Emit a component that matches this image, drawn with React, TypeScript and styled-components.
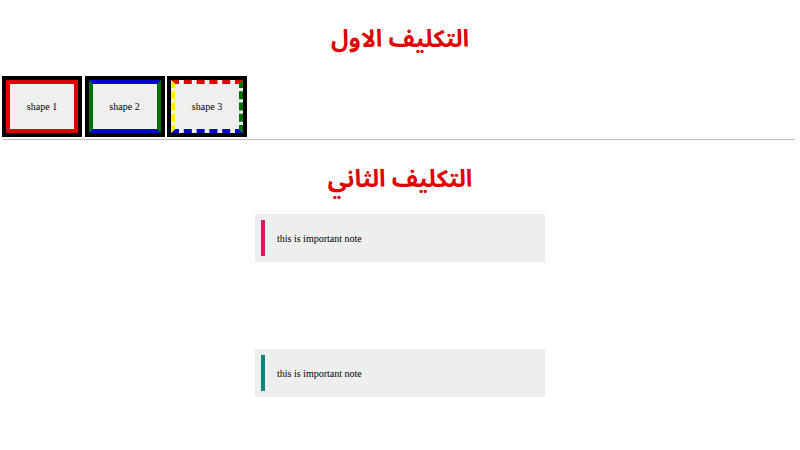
import React from 'react'
import styled, { createGlobalStyle } from 'styled-components'

const Global = createGlobalStyle`
  html, body {
    margin: 0;
    padding: 0;
    background: #fff;
  }
`

const Page = styled.div`
  width: 800px;
  height: 450px;
  overflow: hidden;
  font-family: "Liberation Serif", "Times New Roman", serif;
`

const Title = styled.h1`
  margin: 0;
  height: 40px;
  padding-top: 20px;
  text-align: center;
  direction: rtl;
  color: #e00000;
  font-family: "Noto Sans Arabic", "Noto Naskh Arabic", "DejaVu Sans", sans-serif;
  font-size: 24px;
  font-weight: bold;
  line-height: 40px;
`

const ShapeRow = styled.div`
  display: flex;
  gap: 2.5px;
  padding: 16px 0 0 2px;
`

type ShapeKind = 'solid' | 'mixed' | 'dashed'

const Shape = styled.div<{ $kind: ShapeKind }>`
  box-sizing: border-box;
  width: 80px;
  height: 61px;
  border: 4px solid #000;
  background: #000;
  display: flex;

  span {
    box-sizing: border-box;
    flex: 1;
    display: flex;
    align-items: center;
    justify-content: center;
    background: #efefef;
    font-size: 10px;
    color: #000;
    border-width: 4px;
    border-style: ${p => (p.$kind === 'dashed' ? 'dashed' : 'solid')};
    border-color: ${p =>
      p.$kind === 'solid'
        ? '#e00000'
        : p.$kind === 'mixed'
        ? '#0000d0 #007000 #0000d0 #007000'
        : '#e00000 #007000 #0000d0 #ffee00'};
  }
`

const Rule = styled.hr`
  margin: 2px 5px 0 3px;
  border: 0;
  border-top: 1px solid #bdbdbd;
`

const Notes = styled.div`
  display: flex;
  flex-direction: column;
  align-items: center;
  gap: 87px;
  padding-top: 14px;
`

const Note = styled.div<{ $accent: string }>`
  box-sizing: border-box;
  width: 290px;
  height: 48px;
  padding: 6px;
  background: #eeeeee;

  p {
    margin: 0;
    height: 36px;
    display: flex;
    align-items: center;
    border-left: 4px solid ${p => p.$accent};
    padding-left: 12px;
    font-size: 10px;
    color: #000;
  }
`

export default function App() {
  return (
    <Page>
      <Global />
      <Title>التكليف الاول</Title>
      <ShapeRow>
        <Shape $kind="solid"><span>shape 1</span></Shape>
        <Shape $kind="mixed"><span>shape 2</span></Shape>
        <Shape $kind="dashed"><span>shape 3</span></Shape>
      </ShapeRow>
      <Rule />
      <Title>التكليف الثاني</Title>
      <Notes>
        <Note $accent="#d81b60"><p>this is important note</p></Note>
        <Note $accent="#00897b"><p>this is important note</p></Note>
      </Notes>
    </Page>
  )
}
